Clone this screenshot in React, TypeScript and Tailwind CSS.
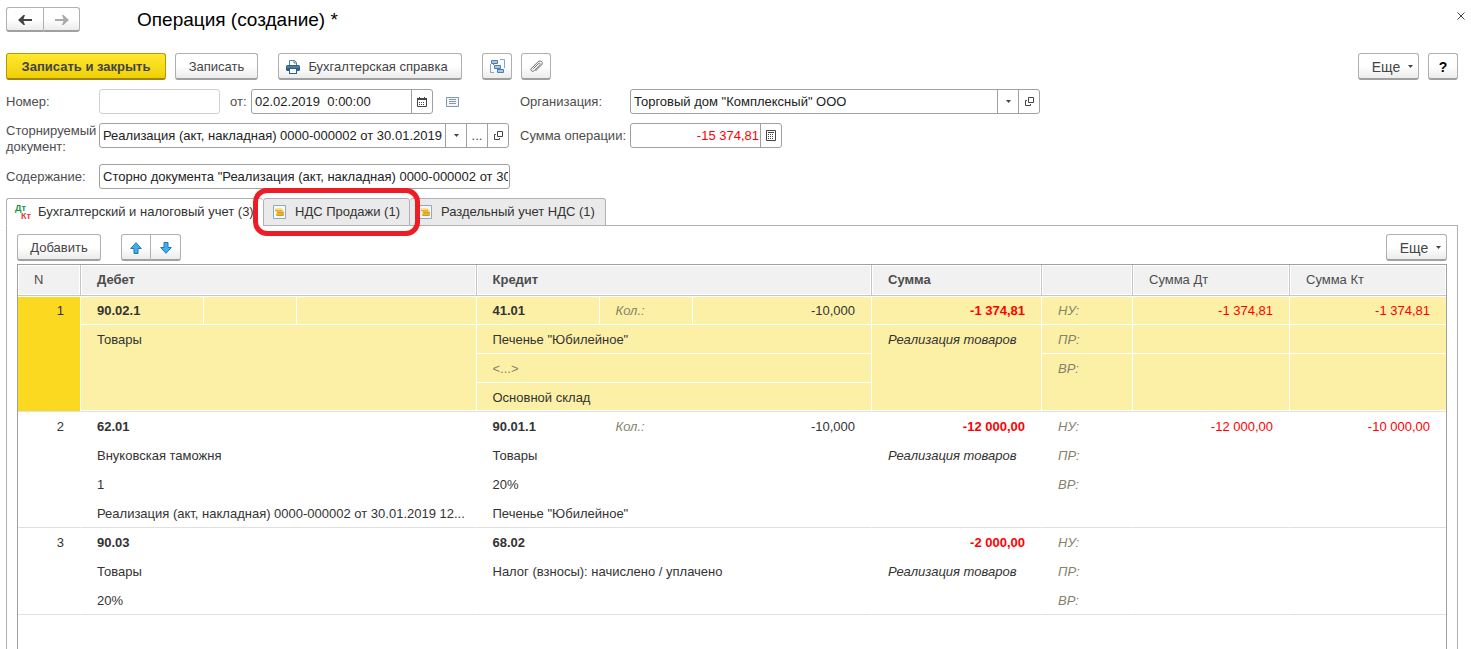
import React from 'react'
import clsx from 'clsx'

interface Entry {
  id: number
  lines: number
  debit: string[]
  credit: string[]
  quantity?: string
  sum: string
  taxDebit?: string
  taxCredit?: string
}

const entries: Entry[] = [
  {
    id: 1,
    lines: 4,
    debit: ['90.02.1', 'Товары'],
    credit: ['41.01', 'Печенье "Юбилейное"', '<...>', 'Основной склад'],
    quantity: '-10,000',
    sum: '-1 374,81',
    taxDebit: '-1 374,81',
    taxCredit: '-1 374,81',
  },
  {
    id: 2,
    lines: 4,
    debit: [
      '62.01',
      'Внуковская таможня',
      '1',
      'Реализация (акт, накладная) 0000-000002 от 30.01.2019 12...',
    ],
    credit: ['90.01.1', 'Товары', '20%', 'Печенье "Юбилейное"'],
    quantity: '-10,000',
    sum: '-12 000,00',
    taxDebit: '-12 000,00',
    taxCredit: '-10 000,00',
  },
  {
    id: 3,
    lines: 3,
    debit: ['90.03', 'Товары', '20%'],
    credit: ['68.02', 'Налог (взносы): начислено / уплачено'],
    sum: '-2 000,00',
  },
]

const taxKinds = ['НУ:', 'ПР:', 'ВР:']

/* ---------- icons ---------- */

function ArrowIcon({ back, color }: { back?: boolean; color: string }) {
  return (
    <svg width="14" height="12" viewBox="0 0 14 12" fill="none">
      {back ? (
        <path d="M0 6 5.500 1H7L5.500 5H14v2H5.500L7 11H5.500z" fill={color} />
      ) : (
        <path d="M14 6 8.500 1H7l1.500 4H0v2h8.500L7 11h1.500z" fill={color} />
      )}
    </svg>
  )
}

function PrinterIcon() {
  return (
    <svg width="14" height="14" viewBox="0 0 14 14">
      <path d="M3.500 6V.5h5l2 2V6" fill="#fff" stroke="#5a7f9c" />
      <path d="M8 .5V3h2.500" fill="none" stroke="#5a7f9c" />
      <rect y="5" width="14" height="6" rx="1.500" fill="#2f5f85" />
      <path d="M1 7h12" stroke="#6c9abb" />
      <rect x="3.500" y="8.500" width="7" height="5" fill="#fff" stroke="#2f5f85" />
    </svg>
  )
}

function StructureIcon() {
  return (
    <svg width="15" height="15" viewBox="0 0 15 15" fill="none">
      <path d="M.5 5v8.500H4M10 .5h4.500V9" stroke="#7fa5c8" />
      <path d="M3.500 4v2M7.500 9v2" stroke="#3d6f9c" />
      <g fill="#a9c6e2" stroke="#4a7eac">
        <path d="M1.500 1.500h6v3h-6zM4.500 6.500h6v3h-6zM7.500 10.500h6v3h-6z" />
      </g>
    </svg>
  )
}

function ClipIcon() {
  return (
    <svg width="15" height="15" viewBox="0 0 15 15" fill="none" stroke="#6a6a6a">
      <path
        d="M4.500 9.500 9.300 4.700c1.300-1.200 2.600.2 1.400 1.400l-5.500 5.500c-2 1.900-4.400-.5-2.500-2.500l6.200-6.200c2.700-2.600 6 .6 3.400 3.300l-5.500 5.500"
        strokeLinecap="round"
      />
    </svg>
  )
}

function CalendarIcon() {
  return (
    <svg width="10" height="10" viewBox="0 0 10 10">
      <path d="M.5 1.500h9v8h-9z" fill="#fff" stroke="#444" />
      <path d="M0 1h10v2H0zM2 0h1v1H2zM7 0h1v1H7z" fill="#444" />
      <path d="M2 5.500h6M2 7.500h6" stroke="#444" strokeDasharray="1 1" />
    </svg>
  )
}

function CalculatorIcon() {
  return (
    <svg width="10" height="11" viewBox="0 0 10 11">
      <path d="M.5.500h9v10h-9z" fill="#fff" stroke="#444" />
      <path d="M2 2.500h6" stroke="#444" />
      <path d="M2 4.500h6M2 6.500h6M2 8.500h6" stroke="#444" strokeDasharray="1 1" />
    </svg>
  )
}

function ListIcon() {
  return (
    <svg width="13" height="10" viewBox="0 0 13 10">
      <path d="M.5.500h12v9H.5z" fill="#f4f7fa" stroke="#8496ab" />
      <path d="M3 2.500h7M3 4.500h7M3 6.500h7" stroke="#8496ab" />
    </svg>
  )
}

function OpenIcon() {
  return (
    <svg width="9" height="9" viewBox="0 0 9 9" fill="none" stroke="#444">
      <path d="M3.500.5h5v5h-5z" />
      <path d="M2 3.500H.5v5h5V7" />
    </svg>
  )
}

function CaretIcon() {
  return (
    <svg width="5" height="3" viewBox="0 0 5 3">
      <path d="M0 0h5L2.500 3z" fill="#444" />
    </svg>
  )
}

function MoveIcon({ down }: { down?: boolean }) {
  return (
    <svg width="12" height="12" viewBox="0 0 12 12">
      <path
        d={down ? 'M4 .5h4v5h3.300L6 11.300.7 5.500H4z' : 'M4 11.500h4v-5h3.300L6 .7.7 6.500H4z'}
        fill="#41aef0"
        stroke="#2277ab"
      />
    </svg>
  )
}

function CoinsIcon() {
  return (
    <svg width="13" height="14" viewBox="0 0 13 14">
      <path d="M.5.500h12v13H.5z" fill="#f3f9fd" stroke="#8fa9bd" />
      <rect x="3" y="8" width="8" height="3" rx="1.500" fill="#d9981c" />
      <rect x="3" y="7.500" width="7.500" height="2" rx="1" fill="#f8d45a" />
      <rect x="4" y="6" width="7" height="2.500" rx="1.200" fill="#c98a18" />
      <rect x="4" y="5.500" width="7" height="1.800" rx=".9" fill="#fbdc6a" />
      <rect x="2" y="3.500" width="7.500" height="3" rx="1.500" fill="#d9981c" />
      <rect x="2" y="3" width="7.500" height="2.300" rx="1.100" fill="#ffe27a" />
    </svg>
  )
}

function DebitCreditIcon() {
  return (
    <span
      className="flex w-4 flex-col text-left text-[9px] leading-2 font-bold"
      aria-hidden="true"
    >
      <span className="text-[#12924a]">Дт</span>
      <span className="text-right text-[#e0403c]">Кт</span>
    </span>
  )
}

/* ---------- controls ---------- */

interface ButtonProps {
  children: React.ReactNode
  className?: string
  label?: string
}

function Button({ children, className, label }: ButtonProps) {
  return (
    <button
      type="button"
      aria-label={label}
      className={clsx(
        'flex h-[27px] items-center justify-center rounded-[3px] border border-b-2 border-[#b0b0b0] border-b-[#a0a0a0] bg-linear-to-b from-white from-50% to-[#ececec] pt-px text-[#444]',
        className,
      )}
    >
      {children}
    </button>
  )
}

interface FieldProps {
  id: string
  value: string
  className?: string
  inputClass?: string
  actions?: { label: string; icon: React.ReactNode }[]
}

function Field({ id, value, className, inputClass, actions = [] }: FieldProps) {
  return (
    <div
      className={clsx(
        'flex h-[25px] overflow-hidden rounded-[3px] border border-[#a0a0a0] bg-white',
        className,
      )}
    >
      <input
        id={id}
        defaultValue={value}
        className={clsx('min-w-0 flex-1 pr-px pl-[3px] outline-none', inputClass)}
      />
      {actions.map(({ label, icon }) => (
        <button
          key={label}
          type="button"
          aria-label={label}
          className="flex w-[21px] shrink-0 items-center justify-center border-l border-[#a0a0a0] text-[#444]"
        >
          {icon}
        </button>
      ))}
    </div>
  )
}

const choose = { label: 'Выбрать', icon: <CaretIcon /> }
const open = { label: 'Открыть', icon: <OpenIcon /> }

function DocumentForm() {
  return (
    <form className="grid grid-cols-[93px_411px_120px_410px] gap-y-[9px] leading-4 text-[#4d4d4d]">
      <label htmlFor="number" className="leading-[25px]">
        Номер:
      </label>
      <div className="flex items-center">
        <Field id="number" value="" className="w-[121px] border-[#d0d0d0]" />
        <label htmlFor="date" className="w-[31px] pl-[10px]">
          от:
        </label>
        <Field
          id="date"
          value="02.02.2019  0:00:00"
          className="w-[182px]"
          inputClass="whitespace-pre text-[#222]"
          actions={[{ label: 'Календарь', icon: <CalendarIcon /> }]}
        />
        <button type="button" aria-label="Список" className="ml-[13px]">
          <ListIcon />
        </button>
      </div>
      <label htmlFor="company" className="pl-[10px] leading-[25px]">
        Организация:
      </label>
      <Field
        id="company"
        value={'Торговый дом "Комплексный" ООО'}
        inputClass="text-[#222]"
        actions={[choose, open]}
      />

      <label htmlFor="source">
        Сторнируемый
        <br />
        документ:
      </label>
      <Field
        id="source"
        value="Реализация (акт, накладная) 0000-000002 от 30.01.2019 12:00:00"
        className="w-[410px]"
        inputClass="text-[#222]"
        actions={[choose, { label: 'Показать все', icon: '...' }, open]}
      />
      <label htmlFor="total" className="pl-[10px] leading-[25px] whitespace-nowrap">
        Сумма операции:
      </label>
      <Field
        id="total"
        value="-15 374,81"
        className="w-[152px]"
        inputClass="text-right text-[#f00]"
        actions={[{ label: 'Калькулятор', icon: <CalculatorIcon /> }]}
      />

      <label htmlFor="content" className="leading-[25px]">
        Содержание:
      </label>
      <Field
        id="content"
        value={'Сторно документа "Реализация (акт, накладная) 0000-000002 от 30.01.2019"'}
        inputClass="text-[#222]"
      />
    </form>
  )
}

function Tabs() {
  const tab =
    'flex h-7 items-center rounded-t-[3px] border border-[#b0b0b0] text-[#333] whitespace-nowrap'
  return (
    <div role="tablist" className="relative -mb-px flex">
      <button
        type="button"
        role="tab"
        aria-selected="true"
        className={clsx(tab, 'w-[257px] gap-[7px] border-r-0 border-b-white bg-white pl-2')}
      >
        <DebitCreditIcon />
        Бухгалтерский и налоговый учет (3)
      </button>
      <div className="relative z-10">
        <button
          type="button"
          role="tab"
          aria-selected="false"
          className={clsx(tab, 'w-[147px] gap-[9px] bg-[#eaeaea] pl-[9px]')}
        >
          <CoinsIcon />
          НДС Продажи (1)
        </button>
        <div className="pointer-events-none absolute -inset-[10px] rounded-[14px] border-[5px] border-[#ee1c24]" />
      </div>
      <button
        type="button"
        role="tab"
        aria-selected="false"
        className={clsx(tab, 'w-[196px] gap-[9px] border-l-0 bg-[#eaeaea] pl-[9px]')}
      >
        <CoinsIcon />
        Раздельный учет НДС (1)
      </button>
    </div>
  )
}

/* ---------- entries table ---------- */

function EntryRows({ entry, selected }: { entry: Entry; selected: boolean }) {
  const { lines, debit, credit } = entry

  // the last value of a column takes all the lines that are left
  const span = (index: number, count: number) => (index === count - 1 ? lines - index : 1)

  const cell = (index: number, rowSpan: number, extra?: string) =>
    clsx(
      'truncate border-r border-b pt-[2px] pl-4 align-top leading-[26px]',
      selected ? 'border-r-white bg-[#fcf0a6]' : 'border-r-transparent bg-white',
      index + rowSpan === lines ? 'border-b-[#e0e0e0]' : 'border-b-white',
      selected && index === 0 && 'shadow-[inset_0_1px_0_#fff]',
      selected && index > 0 && index + rowSpan === lines && 'shadow-[inset_0_-1px_0_#fff]',
      extra,
    )

  const account = (side: string[], index: number, quantity?: string) => {
    if (index >= side.length) return null
    if (index > 0) {
      const rowSpan = span(index, side.length)
      return (
        <td
          colSpan={3}
          rowSpan={rowSpan}
          className={cell(index, rowSpan, side[index] === '<...>' ? 'text-[#85826c]' : '')}
        >
          {side[index]}
        </td>
      )
    }
    return (
      <>
        <td className={cell(0, 1, 'font-bold')}>{side[0]}</td>
        <td className={cell(0, 1, 'text-[#85826c] italic')}>{quantity && 'Кол.:'}</td>
        <td className={cell(0, 1, 'pr-4 text-right')}>{quantity}</td>
      </>
    )
  }

  return (
    <tbody>
      {Array.from({ length: lines }, (_, index) => {
        const kindSpan = span(index, taxKinds.length)
        return (
          <tr key={index} className="h-[29px]">
            {index === 0 && (
              <td
                rowSpan={lines}
                className={cell(
                  0,
                  lines,
                  selected ? 'bg-[#fbd921]! pr-4 text-right' : 'pr-4 text-right',
                )}
              >
                {entry.id}
              </td>
            )}
            {account(debit, index)}
            {account(credit, index, entry.quantity)}
            {index === 0 && (
              <td className={cell(0, 1, 'pr-4 text-right font-bold text-[#f00]')}>{entry.sum}</td>
            )}
            {index === 1 && (
              <td rowSpan={lines - 1} className={cell(1, lines - 1, 'italic')}>
                Реализация товаров
              </td>
            )}
            {index < taxKinds.length && (
              <>
                <td rowSpan={kindSpan} className={cell(index, kindSpan, 'text-[#85826c] italic')}>
                  {taxKinds[index]}
                </td>
                <td
                  rowSpan={kindSpan}
                  className={cell(index, kindSpan, 'pr-4 text-right text-[#f00]')}
                >
                  {index === 0 && entry.taxDebit}
                </td>
                <td
                  rowSpan={kindSpan}
                  className={cell(index, kindSpan, 'border-r-0 pr-4 text-right text-[#f00]')}
                >
                  {index === 0 && entry.taxCredit}
                </td>
              </>
            )}
          </tr>
        )
      })}
    </tbody>
  )
}

function EntriesTable() {
  const head =
    'border-r border-b border-[#c6c6c6] bg-[#f1f1f1] px-4 text-left shadow-[inset_0_0_0_1px_#fff]'
  return (
    <table className="w-full table-fixed border-separate border-spacing-0 text-[#333]">
      <colgroup>
        <col className="w-[63px]" />
        <col className="w-[123px]" />
        <col className="w-[93px]" />
        <col />
        <col className="w-[123px]" />
        <col className="w-[93px]" />
        <col />
        <col className="w-[170px]" />
        <col className="w-[91px]" />
        <col className="w-[157px]" />
        <col className="w-[156px]" />
      </colgroup>
      <thead>
        <tr className="h-[31px] text-[#4d4d4d]">
          <th className={clsx(head, 'font-normal')}>N</th>
          <th colSpan={3} className={head}>
            Дебет
          </th>
          <th colSpan={3} className={head}>
            Кредит
          </th>
          <th className={head}>Сумма</th>
          <th className={head} />
          <th className={clsx(head, 'font-normal')}>Сумма Дт</th>
          <th className={clsx(head, 'border-r-0 font-normal')}>Сумма Кт</th>
        </tr>
      </thead>
      {entries.map((entry) => (
        <EntryRows key={entry.id} entry={entry} selected={entry.id === 1} />
      ))}
    </table>
  )
}

function App() {
  return (
    <div className="flex min-h-screen flex-col bg-white pt-[7px] pr-[13px] pl-[6px] font-['Liberation_Sans',Arial,sans-serif] text-[13px]">
      <header className="flex h-[25px] items-center">
        <Button label="Назад" className="h-[25px]! w-[38px] rounded-r-none">
          <ArrowIcon back color="#444" />
        </Button>
        <Button label="Вперед" className="h-[25px]! w-9 rounded-l-none border-l-0">
          <ArrowIcon color="#aaa" />
        </Button>
        <h1 className="ml-[57px] flex-1 pt-[2px] text-[19px] text-black">Операция (создание) *</h1>
        <button type="button" aria-label="Закрыть" className="-mr-[7px] self-start pt-[5px]">
          <svg width="8" height="8" viewBox="0 0 8 8" stroke="#444">
            <path d="m.5.500 7 7m0-7-7 7" />
          </svg>
        </button>
      </header>

      <div className="mt-[21px] mb-[9px] flex">
        <Button className="w-40 border-[#b89b00]! border-b-[#a08600]! from-[#ffe82e]! from-0%! to-[#f0d000]! font-bold">
          Записать и закрыть
        </Button>
        <Button className="ml-[9px] w-[83px]">Записать</Button>
        <Button className="ml-5 w-[184px] gap-2 pr-[6px]">
          <PrinterIcon />
          Бухгалтерская справка
        </Button>
        <Button label="Структура подчиненности" className="ml-5 w-[30px]">
          <StructureIcon />
        </Button>
        <Button label="Файлы" className="ml-[9px] w-[30px]">
          <ClipIcon />
        </Button>
        <Button className="ml-auto w-[61px] gap-2 pl-2 text-sm">
          Еще
          <CaretIcon />
        </Button>
        <Button className="ml-[9px] w-[30px] text-sm font-bold text-black!">?</Button>
      </div>

      <DocumentForm />

      <div className="mt-[9px] flex flex-1 flex-col">
        <Tabs />
        <main className="flex flex-1 flex-col border border-b-0 border-[#b0b0b0] px-[10px] pt-2">
          <div className="mb-[3px] flex">
            <Button className="w-[84px]">Добавить</Button>
            <Button label="Вверх" className="ml-5 w-[30px] rounded-r-none">
              <MoveIcon />
            </Button>
            <Button label="Вниз" className="w-[30px] rounded-l-none border-l-0">
              <MoveIcon down />
            </Button>
            <Button className="ml-auto w-[61px] gap-2 pl-2 text-sm">
              Еще
              <CaretIcon />
            </Button>
          </div>
          <div className="flex-1 border border-b-0 border-[#a0a0a0]">
            <EntriesTable />
          </div>
        </main>
      </div>
    </div>
  )
}

export default App
